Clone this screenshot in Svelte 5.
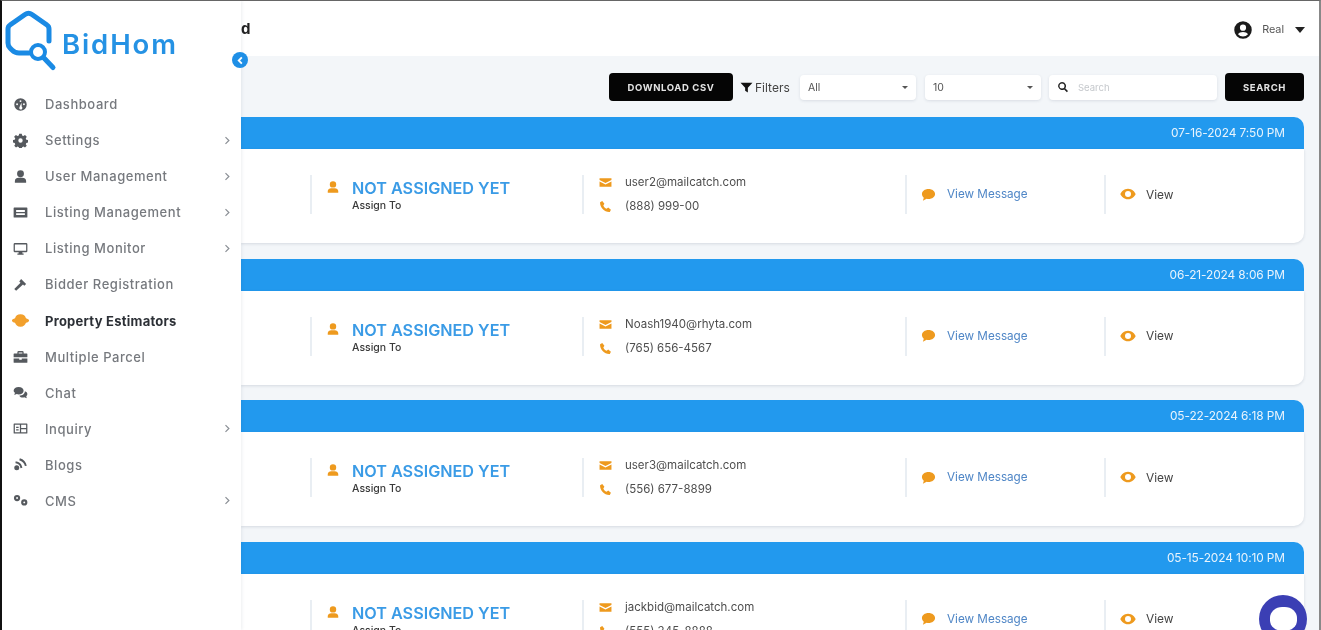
<script>
  const ic = {
    dash: 'M12 2a10 10 0 1 0 0 20 10 10 0 0 0 0-20zm0 3a1.500 1.500 0 1 1 0 3 1.500 1.500 0 0 1 0-3zM6.500 10a1.500 1.500 0 1 1 0 3 1.500 1.500 0 0 1 0-3zm11 0a1.500 1.500 0 1 1 0 3 1.500 1.500 0 0 1 0-3zM13.500 9l.5 6.500a2.500 2.500 0 1 1-3.500.5z',
    gear: 'M10 1h4l.6 3 2 .9 2.600-1.600 2.800 2.800-1.600 2.600.9 2 3 .6v4l-3 .6-.9 2 1.600 2.600-2.800 2.800-2.600-1.600-2 .9-.6 3h-4l-.6-3-2-.9-2.600 1.600-2.800-2.800 1.600-2.600-.9-2-3-.6v-4l3-.6.9-2L1.800 6.100l2.800-2.800 2.600 1.600 2-.9zM12 8.500a3.500 3.500 0 1 0 0 7 3.500 3.500 0 0 0 0-7z',
    user: 'M12 2a5.500 5.500 0 1 1 0 11 5.500 5.500 0 0 1 0-11zM3 22v-3c0-3 3-5 6-5h6c3 0 6 2 6 5v3z',
    list: 'M2 4h20a1 1 0 0 1 1 1v14a1 1 0 0 1-1 1H2a1 1 0 0 1-1-1V5a1 1 0 0 1 1-1zm3 4v3h14V8zm0 5v3h14v-3z',
    mon: 'M3 3h18a2 2 0 0 1 2 2v11a2 2 0 0 1-2 2h-6v2h2v2H7v-2h2v-2H3a2 2 0 0 1-2-2V5a2 2 0 0 1 2-2zm0 2.500V15.500h18V5.500z',
    ham: 'M13 3l8 8-3 3-2-2L5 22l-3-3 10-10-2-2z',
    est: 'M12 4c4 0 6 2 7 5 2 .6 4 1.600 4 3s-2 2.500-4 3c-1 3-3 5-7 5s-6-2-7-5c-2-.5-4-1.600-4-3s2-2.400 4-3c1-3 3-5 7-5z',
    brief: 'M9 3h6a2 2 0 0 1 2 2v2h5a1 1 0 0 1 1 1v5H1V8a1 1 0 0 1 1-1h5V5a2 2 0 0 1 2-2zm0 2.500V7h6V5.500zM1 15h9v2h4v-2h9v6a1 1 0 0 1-1 1H2a1 1 0 0 1-1-1z',
    chat: 'M9 3c4.500 0 8 2.700 8 6s-3.500 6-8 6c-1 0-2-.1-3-.5L2 16l1.200-3.500C1.800 11.500 1 10.300 1 9c0-3.300 3.500-6 8-6zm10 7c2.400.7 4 2.500 4 4.500 0 1.300-.7 2.500-1.800 3.400L22 21l-4-1.300c-3 .8-6.500 0-8-2.700 5 0 9-2.500 9-7z',
    inq: 'M2 4h20a1 1 0 0 1 1 1v14a1 1 0 0 1-1 1H2a1 1 0 0 1-1-1V5a1 1 0 0 1 1-1zm1 2v12h8V6zm10 0v5h8V6zm0 7v5h8v-5zM5 9h4v2H5zm0 4h4v2H5z',
    blog: 'M6 13a4 4 0 1 1 0 8 4 4 0 0 1 0-8zM4 7c6 0 10 4 11 10l-3 1c-.5-4.500-3.500-8-8-8zM11 2c6 1.500 10 6 11 12l-3 .5C18 9.500 15 6.500 10 5z',
    cms: 'M6.500 3a5 5 0 1 1 0 10 5 5 0 0 1 0-10zm0 3.500a1.500 1.500 0 1 0 0 3 1.500 1.500 0 0 0 0-3zM18 10a5 5 0 1 1 0 10 5 5 0 0 1 0-10zm0 3.500a1.500 1.500 0 1 0 0 3 1.500 1.500 0 0 0 0-3z',
    mail: 'M1 4h22v3.500L12 13 1 7.500zM1 10l11 5.500L23 10v10H1z',
    phone: 'M6 2l4 5-2 3c1 3 3 5 6 6l3-2 5 4-2 4c-9 1-19-9-18-18z',
    msg: 'M12 3c6 0 10.500 3.400 10.500 8S18 19 12 19c-1 0-2-.1-3-.4L3 22l1.500-5C2.700 15.500 1.500 13.400 1.500 11 1.500 6.400 6 3 12 3z',
    eye: 'M12 4c6 0 10 4.500 11.500 8C22 15.500 18 20 12 20S2 15.500.5 12C2 8.500 6 4 12 4zm0 3.500a4.500 4.500 0 1 0 0 9 4.500 4.500 0 0 0 0-9z',
    filter: 'M1 3h22l-8.500 9.500V21l-5-3v-5.500z',
    search: 'M10 2a8 8 0 0 1 6.500 12.700l5.500 5.500-2.200 2.200-5.500-5.500A8 8 0 1 1 10 2zm0 3a5 5 0 1 0 0 10 5 5 0 0 0 0-10z'
  };
  const menu = [
    ['Dashboard', 'dash', false], ['Settings', 'gear', true], ['User Management', 'user', true],
    ['Listing Management', 'list', true], ['Listing Monitor', 'mon', true], ['Bidder Registration', 'ham', false],
    ['Property Estimators', 'est', false, true], ['Multiple Parcel', 'brief', false], ['Chat', 'chat', false],
    ['Inquiry', 'inq', true], ['Blogs', 'blog', false], ['CMS', 'cms', true]
  ];
  const rows = [
    ['07-16-2024 7:50 PM', 'user2@mailcatch.com', '(888) 999-00'],
    ['06-21-2024 8:06 PM', 'Noash1940@rhyta.com', '(765) 656-4567'],
    ['05-22-2024 6:18 PM', 'user3@mailcatch.com', '(556) 677-8899'],
    ['05-15-2024 10:10 PM', 'jackbid@mailcatch.com', '(555) 345-8888']
  ];
</script>

<div class="screen">
  <aside class="side">
    <div class="logo">
      <svg class="mark" viewBox="2 1 60 72" width="60" height="72">
        <path d="M29 53H19C16 53 14 52 12 50L10 48C8.500 46.500 8 45 8 43V29C8 27 8.500 26 10 25L25 14.500C27 13 30 13 32 14.500L47 25C48.500 26 49 27 49 29V41" fill="none" stroke="#1a8ae4" stroke-width="5" stroke-linecap="round"/>
        <circle cx="38" cy="52" r="7" fill="#fff" stroke="#1a8ae4" stroke-width="4"/>
        <path d="M43.500 57.500 53 67.500" stroke="#1a8ae4" stroke-width="5" stroke-linecap="round"/>
      </svg>
      <span class="brand">BidHom</span>
    </div>
    <nav class="nav">
      {#each menu as [label, icon, more, active]}
        <div class="item" class:active>
          <svg class="nav-ic" viewBox="0 0 24 24" width="15" height="15"><path d={ic[icon]} fill-rule="evenodd"/></svg>
          <span class="nav-label">{label}</span>
          {#if more}
            <svg class="chev" viewBox="0 0 8 12" width="6" height="9"><path d="M2 1.500 6.500 6 2 10.500" fill="none" stroke="#8a8f95" stroke-width="1.600"/></svg>
          {/if}
        </div>
      {/each}
    </nav>
  </aside>
  <button class="toggle" aria-label="Collapse">
    <svg viewBox="0 0 10 10" width="9" height="9"><path d="M6.500 1.500 3 5l3.500 3.500" fill="none" stroke="#fff" stroke-width="2"/></svg>
  </button>

  <main class="main">
    <header class="top">
      <span class="title">d</span>
      <div class="account">
        <svg viewBox="0 0 24 24" width="20" height="20"><path fill="#1b1b1b" fill-rule="evenodd" d="M12 1.500a10.500 10.500 0 1 1 0 21 10.500 10.500 0 0 1 0-21zM12 5.500a3.700 3.700 0 1 0 0 7.400 3.700 3.700 0 0 0 0-7.400zM12 14.500c-2.600 0-5 1-6 2.700a8 8 0 0 0 12 0c-1-1.700-3.400-2.700-6-2.700z"/></svg>
        <span class="acc-name">Real</span>
        <span class="caret big"></span>
      </div>
    </header>
    <section class="content">
      <div class="tools">
        <button class="btn csv">DOWNLOAD CSV</button>
        <div class="filters">
          <svg viewBox="0 0 24 24" width="13" height="13"><path d={ic.filter} fill="#111"/></svg>
          <span>Filters</span>
        </div>
        <div class="field sel"><span>All</span><span class="caret"></span></div>
        <div class="field sel"><span>10</span><span class="caret"></span></div>
        <div class="field find">
          <svg viewBox="0 0 24 24" width="12" height="12"><path d={ic.search} fill="#222" fill-rule="evenodd"/></svg>
          <span class="ph">Search</span>
        </div>
        <button class="btn go">SEARCH</button>
      </div>
      <div class="list">
        {#each rows as [date, mail, phone]}
          <article class="card">
            <div class="bar">{date}</div>
            <div class="body">
              <div class="lead"></div>
              <div class="col assign">
                <svg class="oi" viewBox="0 0 24 24" width="14" height="14"><path d={ic.user}/></svg>
                <div>
                  <div class="na">NOT ASSIGNED YET</div>
                  <div class="to">Assign To</div>
                </div>
              </div>
              <div class="col contact">
                <div class="line"><svg class="oi" viewBox="0 0 24 24" width="13" height="13"><path d={ic.mail}/></svg><span>{mail}</span></div>
                <div class="line"><svg class="oi" viewBox="0 0 24 24" width="13" height="13"><path d={ic.phone}/></svg><span>{phone}</span></div>
              </div>
              <div class="col act">
                <svg class="oi" viewBox="0 0 24 24" width="15" height="15"><path d={ic.msg}/></svg>
                <span class="msg">View Message</span>
              </div>
              <div class="col act">
                <svg class="oi" viewBox="0 0 24 24" width="16" height="16"><path d={ic.eye} fill-rule="evenodd"/></svg>
                <span class="view">View</span>
              </div>
            </div>
          </article>
        {/each}
      </div>
    </section>
  </main>
  <div class="bubble"><span class="bubble-in"></span></div>
</div>

<style>
  :global(body) { margin: 0; background: #fff; }
  .screen {
    position: relative; display: flex; width: 1321px; height: 630px; box-sizing: border-box;
    overflow: hidden; background: #fff; border-top: 1px solid #666; border-left: 2px solid #111; border-right: 2px solid #888;
    font-family: Inter, "Liberation Sans", sans-serif; color: #222;
  }
  .side { flex: 0 0 239px; background: #fff; box-shadow: 1px 0 3px rgba(30,50,80,.08); z-index: 2; filter: blur(0.7px); }
  .logo { display: flex; align-items: flex-start; height: 73px; }
  .mark { flex: none; }
  .brand { margin-top: 26px; font-family: Inter, sans-serif; font-size: 27.500px; line-height: 34px; font-weight: 600; letter-spacing: 1.900px; color: #2592e4; }
  .nav { display: flex; flex-direction: column; padding-top: 12px; }
  .item { display: flex; align-items: center; height: 36.090px; padding-left: 11px; color: #76797e; }
  .nav-ic { flex: none; fill: #55595e; }
  .nav-label { margin-left: 17px; font-size: 13px; font-weight: 500; letter-spacing: .55px; }
  .chev { margin-left: auto; margin-right: 11px; }
  .active { color: #2c3036; }
  .active .nav-label { font-weight: 700; letter-spacing: .25px; }
  .active .nav-ic { fill: #f2a02c; transform: scale(1.250); }
  .toggle {
    position: absolute; left: 230px; top: 51px; z-index: 3; width: 16px; height: 16px; padding: 0; border: 0;
    border-radius: 50%; background: #1f8fe6; display: flex; align-items: center; justify-content: center; filter: blur(0.4px);
  }
  .main { flex: 1; min-width: 0; display: flex; flex-direction: column; filter: blur(0.7px); }
  .top { flex: 0 0 55px; display: flex; align-items: center; justify-content: space-between; padding-right: 14px; background: #fff; }
  .title { font-size: 15px; font-weight: 700; color: #222; margin-bottom: 1px; }
  .account { display: flex; align-items: center; margin-top: 2px; }
  .acc-name { margin-left: 9px; font-size: 10.800px; color: #555; }
  .big { margin-left: 11px; border-width: 6px 5px 0 !important; border-top-color: #222 !important; }
  .content { flex: 1; background: #f3f6f9; padding-right: 15px; overflow: hidden; }
  .tools { display: flex; justify-content: flex-end; align-items: center; height: 61px; box-sizing: border-box; padding-top: 1px; }
  .btn { height: 28px; border: 0; border-radius: 4px; background: #050505; color: #e4e4e4; font-family: Inter, sans-serif; font-size: 9.500px; font-weight: 700; letter-spacing: .6px; padding: 0; }
  .csv { width: 124px; }
  .go { width: 79px; margin-left: 8px; }
  .filters { display: flex; align-items: center; margin-left: 7px; width: 60px; gap: 2px; font-size: 12px; color: #444; }
  .field { display: flex; align-items: center; height: 25px; box-sizing: border-box; background: #fff; border-radius: 4px; box-shadow: 0 1px 3px rgba(30,50,80,.12); font-size: 10.500px; color: #555; }
  .sel { width: 116px; padding: 0 8px; justify-content: space-between; margin-right: 9px; }
  .sel + .find { margin-left: -1px; }
  .find { width: 168px; padding-left: 8px; gap: 9px; }
  .ph { color: #c5c8cc; font-size: 9.500px; }
  .caret { width: 0; height: 0; border-style: solid; border-width: 3px 3px 0; border-color: #555 transparent transparent; }
  .list { display: flex; flex-direction: column; gap: 15.670px; }
  .bar { height: 32px; line-height: 32px; text-align: right; padding-right: 19px; background: #2299ee; border-radius: 0 10px 0 0; color: #e9f4fd; font-size: 11.900px; letter-spacing: -.1px; }
  .body {
    height: 94px; box-sizing: border-box; background: #fff; border-radius: 0 0 10px 0;
    box-shadow: 0 1px 3px rgba(30,50,80,.14); display: grid; grid-template-columns: 69px 272px 323px 199px 1fr; align-items: center;
  }
  .col { display: flex; height: 39px; box-sizing: border-box; border-left: 2px solid #e9eef3; margin-top: -3px; }
  .oi { flex: none; fill: #ee9a1e; }
  .assign { padding: 4px 0 0 14px; gap: 12px; }
  .assign .oi { margin-top: 1px; }
  .na { font-size: 16.200px; line-height: 18px; font-weight: 600; color: #3a9be6; }
  .to { font-size: 10.500px; line-height: 14px; font-weight: 500; color: #3a3a3a; margin-top: 2px; }
  .contact { flex-direction: column; justify-content: center; gap: 9px; padding-left: 15px; height: 39px; }
  .line { display: flex; align-items: center; gap: 13px; font-size: 11.500px; line-height: 15px; color: #4e4e4e; }
  .act { align-items: center; padding-left: 14px; gap: 11px; font-size: 11.600px; padding-bottom: 1px; }
  .msg { color: #4f86c6; font-size: 11.700px; }
  .view { color: #444; font-size: 11.900px; margin-left: -1px; }
  .bubble {
    position: absolute; left: 1257px; top: 594px; z-index: 4; width: 48px; height: 48px; border-radius: 50%;
    background: #3b3fb4; display: flex; align-items: center; justify-content: center; filter: blur(0.6px);
  }
  .bubble-in { width: 27px; height: 24px; background: #fff; border-radius: 45%; }
</style>
